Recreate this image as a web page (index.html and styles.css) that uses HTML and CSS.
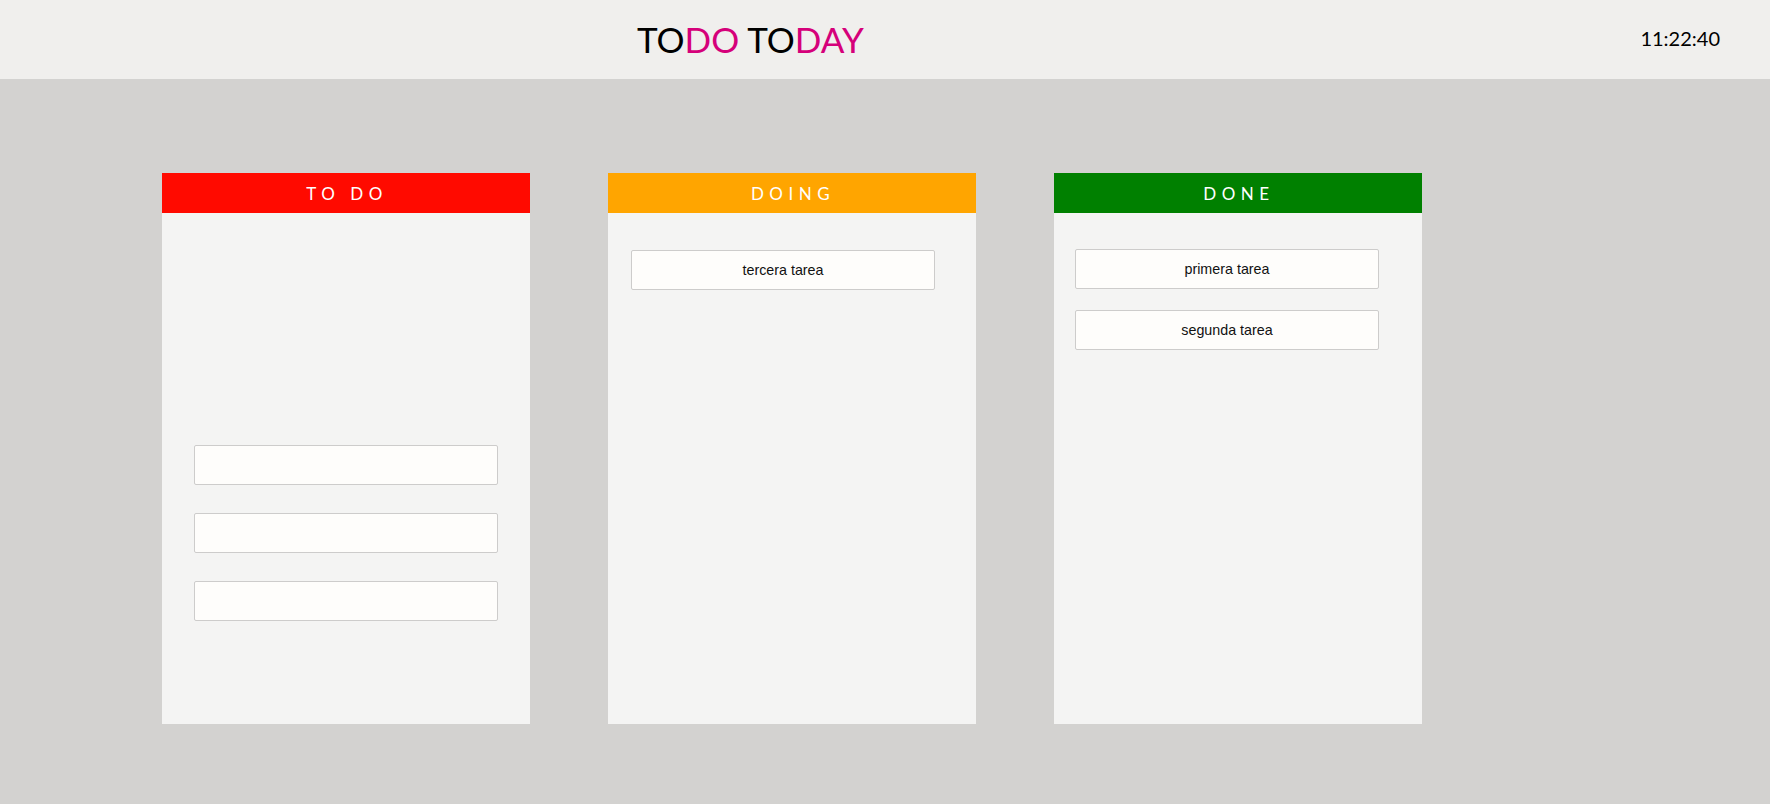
FILE: index.html
```html
<!DOCTYPE html>
<html lang="es">
<head>
<meta charset="utf-8">
<title>TODO TODAY</title>
<link rel="stylesheet" href="styles.css">
</head>
<body>
<header class="topbar">
  <h1 class="logo">TO<span class="accent">DO</span> TO<span class="accent">DAY</span></h1>
  <div class="clock">11:22:40</div>
</header>
<main class="board">
  <section class="column">
    <h2 class="column-title title-todo">TO DO</h2>
    <div class="column-body body-todo">
      <input class="task-input" type="text">
      <input class="task-input" type="text">
      <input class="task-input" type="text">
    </div>
  </section>
  <section class="column">
    <h2 class="column-title title-doing">DOING</h2>
    <div class="column-body body-doing">
      <div class="card">tercera tarea</div>
    </div>
  </section>
  <section class="column">
    <h2 class="column-title title-done">DONE</h2>
    <div class="column-body body-done">
      <div class="card">primera tarea</div>
      <div class="card">segunda tarea</div>
    </div>
  </section>
</main>
</body>
</html>
```
FILE: styles.css
```css
* { box-sizing: border-box; }
html, body { margin: 0; padding: 0; }
body {
  background: #d3d2d0;
  font-family: Lato, "Open Sans", sans-serif;
  color: #000;
  height: 804px;
  overflow: hidden;
}
.topbar {
  height: 79px;
  background: #f0efed;
  display: flex;
  align-items: center;
  justify-content: space-between;
  padding: 0 50px 0 637px;
}
.logo {
  margin: 0;
  font-size: 35px;
  font-weight: 400;
  letter-spacing: 0;
  line-height: 1;
}
.accent { color: #d5007a; }
.clock {
  font-size: 20px;
  font-weight: 400;
  margin-top: -4px;
  line-height: 1;
}
.board {
  display: flex;
  gap: 78px;
  padding: 94px 0 0 162px;
}
.column {
  width: 368px;
  height: 551px;
  display: flex;
  flex-direction: column;
}
.column-title {
  margin: 0;
  height: 40px;
  display: flex;
  align-items: center;
  justify-content: center;
  font-size: 17px;
  font-weight: 400;
  letter-spacing: 5.5px;
  padding-left: 2px;
  color: #fff;
}
.title-todo { background: #ff0a00; }
.title-doing { background: #ffa500; }
.title-done { background: #008000; }
.column-body {
  flex: 1;
  background: #f4f4f3;
  display: flex;
  flex-direction: column;
}
.body-todo { padding: 232px 0 0 32px; gap: 28px; }
.body-doing { padding: 37px 0 0 23px; gap: 21px; }
.body-done { padding: 36px 0 0 21px; gap: 21px; }
.card, .task-input {
  width: 304px;
  height: 40px;
  background: #fefdfb;
  border: 1px solid #cdcccb;
  border-radius: 2px;
}
.card {
  display: flex;
  align-items: center;
  justify-content: center;
  font-family: "Liberation Sans", Arial, sans-serif;
  font-size: 14.3px;
  color: #111;
}
.task-input {
  margin: 0;
  padding: 0 8px;
  font-family: "Liberation Sans", Arial, sans-serif;
  font-size: 14px;
  outline: none;
}
```
